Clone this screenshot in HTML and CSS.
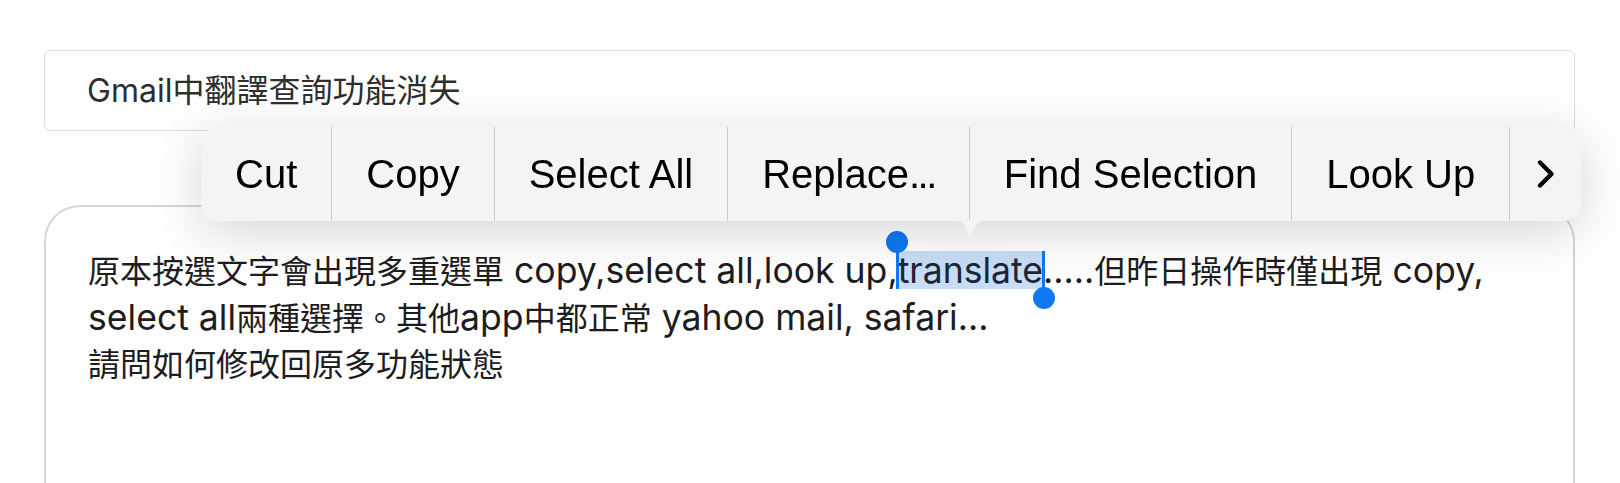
FILE: index.html
```html
<!DOCTYPE html>
<html lang="zh-Hant">
<head>
<meta charset="utf-8">
<title>Gmail中翻譯查詢功能消失</title>
<link rel="stylesheet" href="styles.css">
</head>
<body>
<div class="page">
  <div class="subject">Gmail中翻譯查詢功能消失</div>
  <div class="message">
    <p class="text">原本按選文字會出現多重選單<span class="latin" lang="en"> copy,select all,look up,<span class="sel"><span class="handle start"></span>translate<span class="handle end"></span></span>.....</span>但昨日操作時僅出現<span class="latin" lang="en"> copy,</span><br><span class="latin" lang="en">select all</span>兩種選擇。其他<span class="latin" lang="en">app</span>中都正常<span class="latin" lang="en"> yahoo mail, safari...</span><br>請問如何修改回原多功能狀態</p>
  </div>
  <div class="menu-wrap">
    <div class="menu">
      <div class="item">Cut</div>
      <div class="item">Copy</div>
      <div class="item">Select All</div>
      <div class="item">Replace<span class="dots">...</span></div>
      <div class="item">Find Selection</div>
      <div class="item">Look Up</div>
      <div class="item more">
        <svg width="20" height="30" viewBox="0 0 20 30"><path d="M4 3.5 L15.5 15 L4 26.5" fill="none" stroke="#000" stroke-width="4.4" stroke-linecap="round" stroke-linejoin="round"/></svg>
      </div>
    </div>
    <svg class="arrow" width="36" height="17" viewBox="0 0 36 17"><path d="M0 0 Q8 0 12 5 L16.2 14 Q18 17 19.8 14 L24 5 Q28 0 36 0 Z" fill="#f4f4f4"/></svg>
  </div>
</div>
</body>
</html>
```

FILE: styles.css
```css
html, body {
  margin: 0;
  padding: 0;
  background: #ffffff;
  overflow: hidden;
}

.page {
  position: relative;
  padding: 50px 45px 0 44px;
  height: 483px;
  box-sizing: border-box;
  font-family: "Inter", "Noto Sans CJK TC", sans-serif;
}

.subject {
  height: 81px;
  box-sizing: border-box;
  border: 1px solid #dcdcdc;
  border-radius: 6px;
  padding-left: 42px;
  display: flex;
  align-items: center;
  font-size: 32px;
  line-height: 40px;
  color: #2e2e2e;
}

.message {
  margin-top: 74px;
  height: 400px;
  border: 2px solid #d6d6d6;
  border-bottom: none;
  border-radius: 36px 36px 0 0;
  padding: 41px 42px 0 42px;
}

.text {
  margin: 0;
  font-size: 32px;
  line-height: 46px;
  color: #1d1d1f;
  white-space: nowrap;
}

.latin {
  font-size: 35.6px;
}

.sel {
  position: relative;
  background: linear-gradient(#c9ddf6, #c9ddf6) no-repeat;
  background-size: 100% 38px;
  background-position: 0 2px;
  color: #1b2636;
}

.handle {
  position: absolute;
  top: 2px;
  height: 38px;
  width: 3px;
  background: #0f78f2;
}

.handle.start {
  left: -2px;
}

.handle.end {
  right: -2px;
}

.handle::after {
  content: "";
  position: absolute;
  left: -9.5px;
  width: 22px;
  height: 22px;
  border-radius: 50%;
  background: #0f78f2;
}

.handle.start::after {
  top: -20px;
}

.handle.end::after {
  bottom: -20px;
}

.menu-wrap {
  position: absolute;
  left: 201px;
  top: 127px;
  filter: drop-shadow(0 10px 26px rgba(0, 0, 0, 0.17));
}

.menu {
  display: flex;
  height: 94px;
  background: #f4f4f4;
  border-radius: 17px;
  overflow: hidden;
}

.item {
  display: flex;
  align-items: center;
  padding: 0 34px;
  font-family: "Liberation Sans", "Inter", sans-serif;
  font-size: 40px;
  color: #000;
  border-left: 1px solid #cacaca;
}

.item:first-child {
  border-left: none;
}

.dots {
  letter-spacing: -2.5px;
}

.item.more {
  padding: 0 25px 0 26px;
}

.arrow {
  position: absolute;
  left: 751px;
  top: 93px;
  display: block;
}
```
